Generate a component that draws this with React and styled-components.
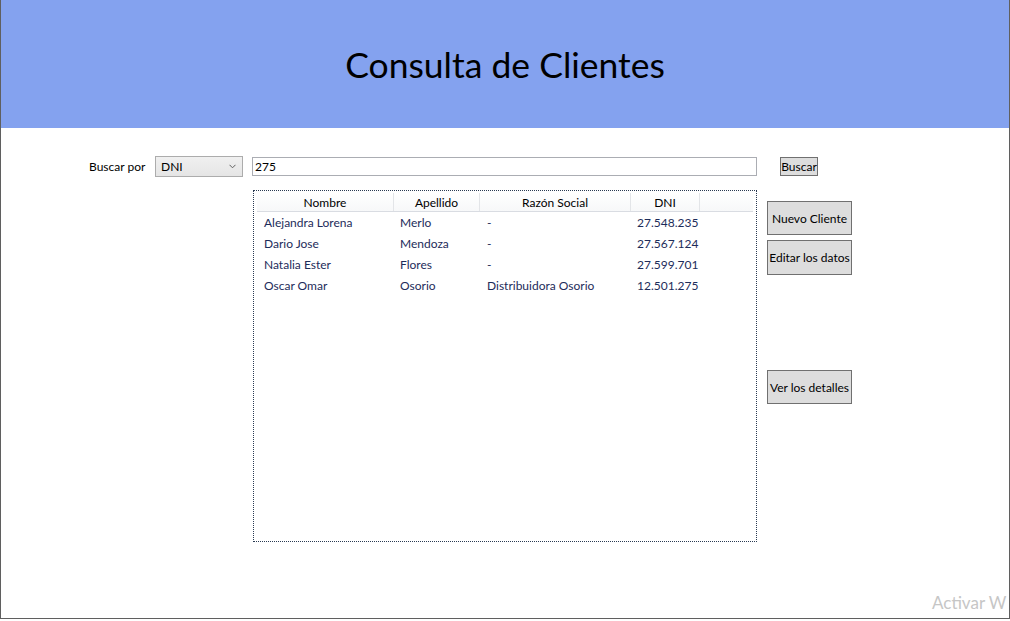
import React from "react";
import styled, { createGlobalStyle } from "styled-components";

const Global = createGlobalStyle`
  html, body { margin: 0; padding: 0; background: #ffffff; }
  body { font-family: "Lato", "Open Sans", sans-serif; }
  * { box-sizing: border-box; }
`;

const Frame = styled.div`
  position: relative;
  width: 1010px;
  height: 619px;
  border-left: 1px solid #5f5f5f;
  border-right: 1px solid #5f5f5f;
  border-bottom: 1px solid #5f5f5f;
  overflow: hidden;
  background: #fff;
`;

const Header = styled.header`
  height: 128px;
  background: #84a2ef;
  display: flex;
  align-items: center;
  justify-content: center;
`;

const Title = styled.h1`
  margin: 0;
  padding-top: 1px;
  font-family: "Lato", sans-serif;
  font-weight: 400;
  font-size: 35.5px;
  color: #000;
`;

const Body = styled.div`
  padding: 28px 0 0 88px;
  font-size: 12px;
`;

const SearchRow = styled.div`
  display: flex;
  align-items: center;
  height: 21px;
`;

const Label = styled.span`
  width: 66px;
  color: #000;
  font-size: 12px;
`;

const Combo = styled.div`
  width: 88px;
  height: 21px;
  border: 1px solid #acacac;
  background: linear-gradient(#f0f0f0, #e5e5e5);
  display: flex;
  align-items: center;
  justify-content: space-between;
  padding: 0 6px 0 5px;
  font-size: 12px;
  color: #000;
`;

const Chevron = styled.svg`
  width: 7px;
  height: 5px;
`;

const Input = styled.div`
  margin-left: 9px;
  width: 505px;
  height: 19px;
  border: 1px solid #abadb3;
  display: flex;
  align-items: center;
  padding-left: 2px;
  font-size: 12px;
  color: #000;
`;

const SmallButton = styled.button`
  margin-left: 23px;
  width: 38px;
  height: 19px;
  padding: 0;
  border: 1px solid #707070;
  background: #dddddd;
  font-family: inherit;
  font-size: 12px;
  color: #000;
  line-height: 1;
`;

const MainRow = styled.div`
  display: flex;
  margin: 13px 0 0 164px;
  gap: 10px;
`;

const List = styled.div`
  width: 504px;
  height: 352px;
  border: 1px dotted #2a3a52;
  padding: 2px 3px;
`;

const HeadRow = styled.div`
  display: flex;
  height: 19px;
  border-bottom: 1px solid #d9dce2;
  background: linear-gradient(#ffffff, #f7f8f9);
`;

const HeadCell = styled.div`
  width: ${(p) => p.w}px;
  flex: ${(p) => (p.w ? "none" : "1")};
  border-right: ${(p) => (p.w ? "1px solid #e3e5e8" : "none")};
  display: flex;
  align-items: center;
  justify-content: center;
  font-size: 12px;
  color: #000;
`;

const Row = styled.div`
  display: flex;
  height: 21px;
  align-items: center;
`;

const Cell = styled.div`
  width: ${(p) => p.w}px;
  padding-left: ${(p) => p.pl}px;
  font-size: 12px;
  color: #1d2c5a;
  white-space: nowrap;
`;

const Side = styled.div`
  display: flex;
  flex-direction: column;
  padding-top: 11px;
`;

const BigButton = styled.button`
  width: 85px;
  height: ${(p) => p.h || 34}px;
  margin-top: ${(p) => p.mt || 0}px;
  border: 1px solid #707070;
  background: #dddddd;
  font-family: inherit;
  font-size: 12px;
  color: #000;
  padding: 0;
  white-space: nowrap;
`;

const Watermark = styled.div`
  position: absolute;
  left: 931px;
  top: 592px;
  font-size: 17px;
  color: #c6c6c6;
  white-space: nowrap;
  font-family: "Lato", sans-serif;
`;

const cols = [
  { w: 137, pl: 7 },
  { w: 86, pl: 6 },
  { w: 151, pl: 7 },
  { w: 69, pl: 6 },
];

const data = [
  ["Alejandra Lorena", "Merlo", "-", "27.548.235"],
  ["Dario Jose", "Mendoza", "-", "27.567.124"],
  ["Natalia Ester", "Flores", "-", "27.599.701"],
  ["Oscar Omar", "Osorio", "Distribuidora Osorio", "12.501.275"],
];

export default function App() {
  return (
    <>
      <Global />
      <Frame>
        <Header>
          <Title>Consulta de Clientes</Title>
        </Header>
        <Body>
          <SearchRow>
            <Label>Buscar por</Label>
            <Combo>
              DNI
              <Chevron viewBox="0 0 7 5">
                <path d="M0.5 0.8 L3.5 3.8 L6.5 0.8" fill="none" stroke="#606060" strokeWidth="1" />
              </Chevron>
            </Combo>
            <Input>275</Input>
            <SmallButton>Buscar</SmallButton>
          </SearchRow>
          <MainRow>
            <List>
              <HeadRow>
                <HeadCell w={137}>Nombre</HeadCell>
                <HeadCell w={86}>Apellido</HeadCell>
                <HeadCell w={151}>Razón Social</HeadCell>
                <HeadCell w={69}>DNI</HeadCell>
                <HeadCell />
              </HeadRow>
              {data.map((r, i) => (
                <Row key={i}>
                  {r.map((t, j) => (
                    <Cell key={j} w={cols[j].w} pl={cols[j].pl}>
                      {t}
                    </Cell>
                  ))}
                </Row>
              ))}
            </List>
            <Side>
              <BigButton h={34}>Nuevo Cliente</BigButton>
              <BigButton h={35} mt={5}>Editar los datos</BigButton>
              <BigButton h={34} mt={95}>Ver los detalles</BigButton>
            </Side>
          </MainRow>
        </Body>
        <Watermark>Activar W</Watermark>
      </Frame>
    </>
  );
}
